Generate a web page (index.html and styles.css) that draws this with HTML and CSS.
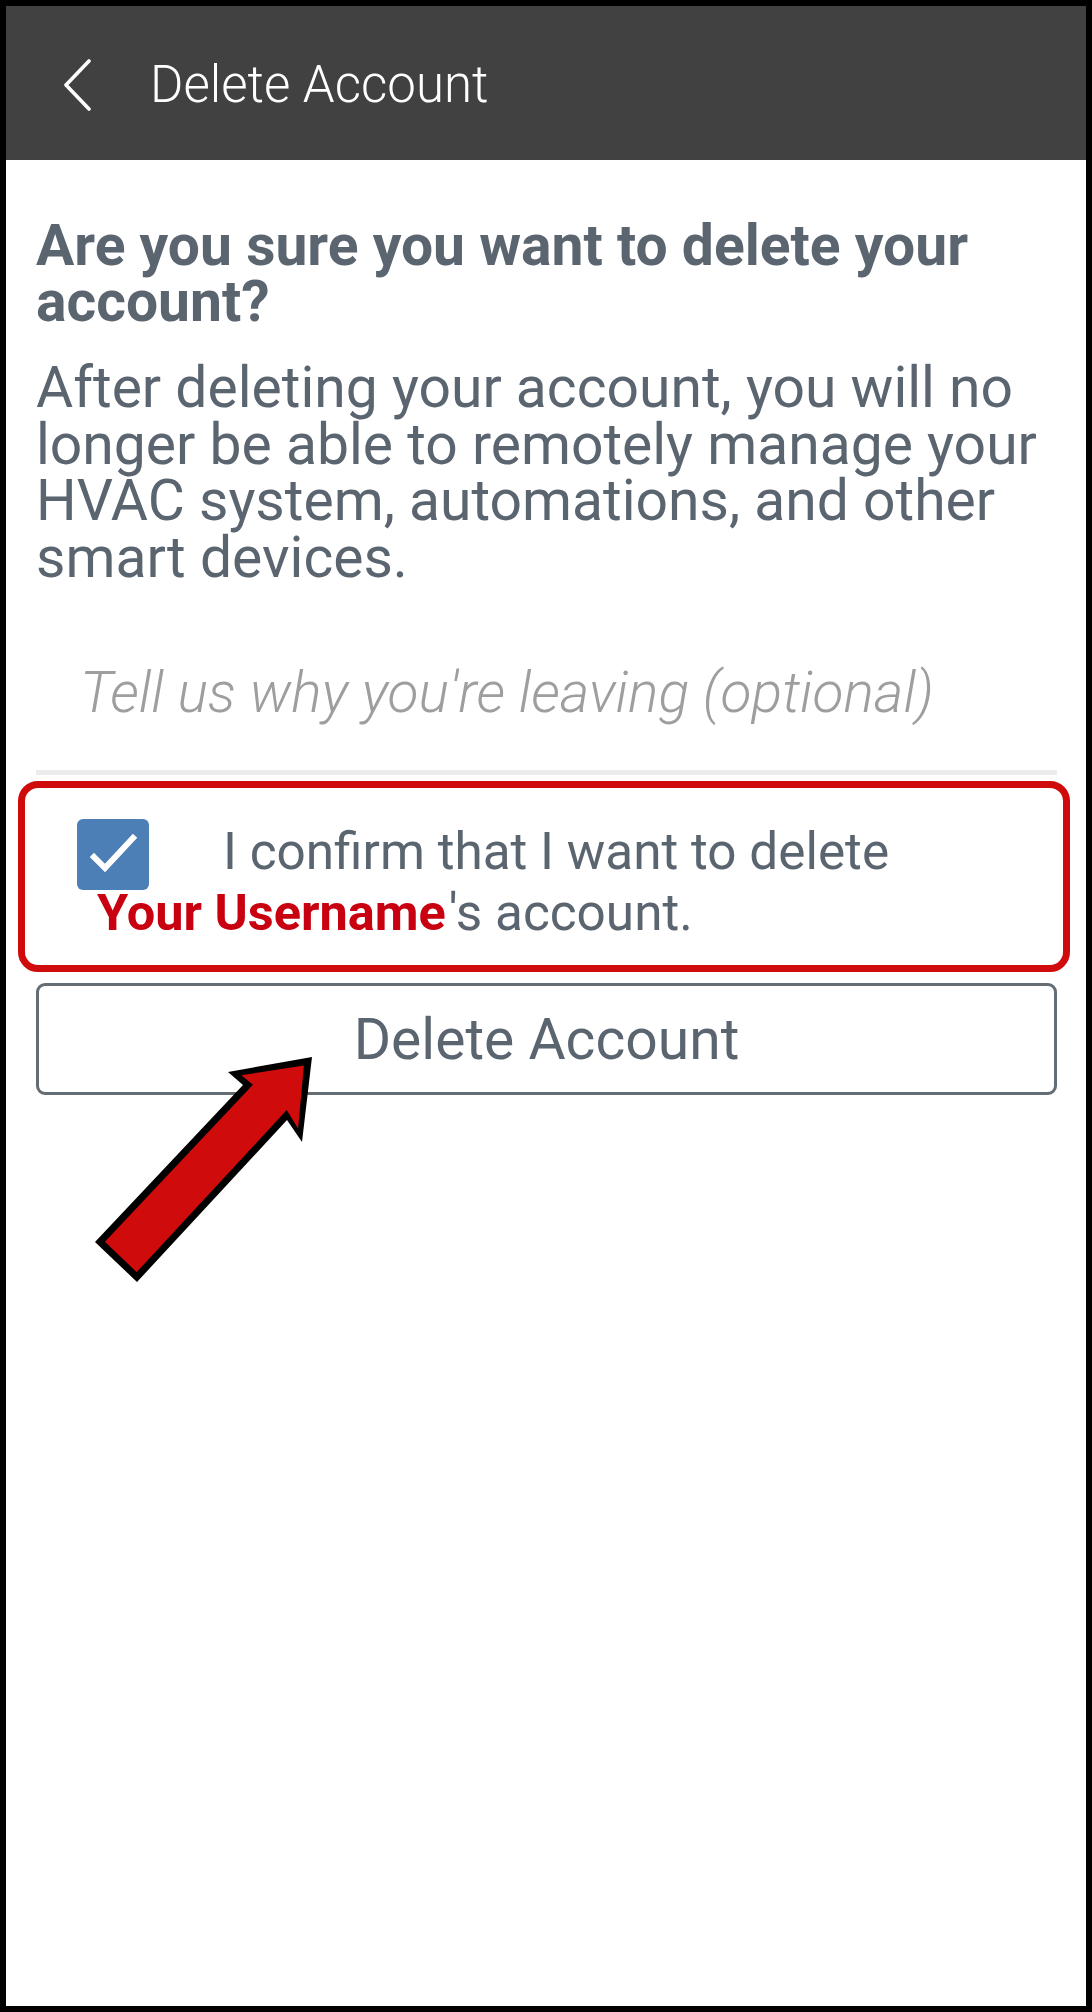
FILE: index.html
```html
<!DOCTYPE html>
<html lang="en">
<head>
<meta charset="utf-8">
<title>Delete Account</title>
<link rel="stylesheet" href="styles.css">
</head>
<body>
<div class="screen">
  <header class="appbar">
    <svg class="back" width="30" height="52" viewBox="0 0 30 52" aria-hidden="true">
      <polyline points="26,2 3,26 26,50" fill="none" stroke="#ffffff" stroke-width="3.6" stroke-linecap="round" stroke-linejoin="round"/>
    </svg>
    <h1 class="appbar-title">Delete Account</h1>
  </header>
  <main class="content">
    <h2 class="question">Are you sure you want to delete your account?</h2>
    <p class="info">After deleting your account, you will no longer be able to remotely manage your HVAC system, automations, and other smart devices.</p>
    <div class="reason">
      <span class="placeholder">Tell us why you're leaving (optional)</span>
    </div>
    <div class="confirm-box">
      <p class="confirm"><span class="checkbox"><svg width="72" height="71" viewBox="0 0 72 71" aria-hidden="true"><polyline points="17,38 28,49 56,19" fill="none" stroke="#ffffff" stroke-width="6" stroke-linecap="square"/></svg></span>I confirm that I want to delete <b class="username">Your Username</b>'s account.</p>
    </div>
    <button class="delete-btn" type="button">Delete Account</button>
  </main>
  <svg class="arrow" width="260" height="260" viewBox="80 1040 260 260" aria-hidden="true">
    <polygon points="312,1057 228,1072 243,1085 95,1242 137,1282 287,1120 302,1142" fill="#000000"/>
    <polygon points="303.9,1065.5 241.5,1075.2 252.9,1084.7 104.9,1241.7 136.7,1272.1 286.7,1110.1 298.1,1128.6" fill="#d00b0b"/>
  </svg>
</div>
</body>
</html>
```
FILE: styles.css
```css
html, body {
  margin: 0;
  padding: 0;
  background: #000000;
}

body {
  font-family: Roboto, "Noto Sans", "Liberation Sans", sans-serif;
}

.screen {
  position: relative;
  margin: 6px;
  width: 1080px;
  height: 2000px;
  background: #ffffff;
  overflow: hidden;
}

.appbar {
  height: 154px;
  background: #414141;
  display: flex;
  align-items: center;
  padding-left: 57px;
  padding-top: 4px;
  box-sizing: border-box;
}

.back {
  display: block;
  flex: none;
}

.appbar-title {
  margin: 0 0 0 57px;
  font-weight: 300;
  font-size: 51px;
  color: #ffffff;
  line-height: 60px;
}

.content {
  padding: 58px 29px 0 30px;
  display: flex;
  flex-direction: column;
}

.question {
  margin: 0;
  font-size: 57px;
  line-height: 56px;
  font-weight: 700;
  color: #5b6570;
}

.info {
  margin: 30px 0 0 0;
  font-size: 57px;
  line-height: 56.5px;
  font-weight: 400;
  color: #5b6570;
}

.reason {
  margin-top: 77px;
  padding: 0 0 47px 44px;
  border-bottom: 5px solid #ececec;
}

.placeholder {
  display: block;
  font-size: 57px;
  line-height: 60px;
  font-weight: 300;
  font-style: italic;
  color: #9e9e9e;
}

.confirm-box {
  margin: 6px -13px 0 -18px;
  border: 7px solid #d00b0b;
  border-radius: 20px;
  padding: 33px 20px 22px 72px;
}

.confirm {
  margin: 0;
  font-size: 51.3px;
  line-height: 61px;
  color: #5b6570;
}

.checkbox {
  display: inline-block;
  overflow: hidden;
  width: 72px;
  height: 71px;
  margin: -2px 74px -21px -20px;
  background: #4b7fb5;
  border-radius: 6px;
  vertical-align: baseline;
}

.checkbox svg {
  display: block;
}

.username {
  font-weight: 700;
  font-size: 50.5px;
  color: #c8000f;
  white-space: nowrap;
  margin-right: 3px;
}

.delete-btn {
  margin-top: 11px;
  height: 112px;
  border: 3px solid #646c74;
  border-radius: 9px;
  background: #ffffff;
  font-family: Roboto, "Noto Sans", "Liberation Sans", sans-serif;
  font-size: 57px;
  font-weight: 400;
  color: #5b6570;
  padding: 0;
  display: flex;
  align-items: center;
  justify-content: center;
}

.arrow {
  position: absolute;
  left: 74px;
  top: 1034px;
}
```
